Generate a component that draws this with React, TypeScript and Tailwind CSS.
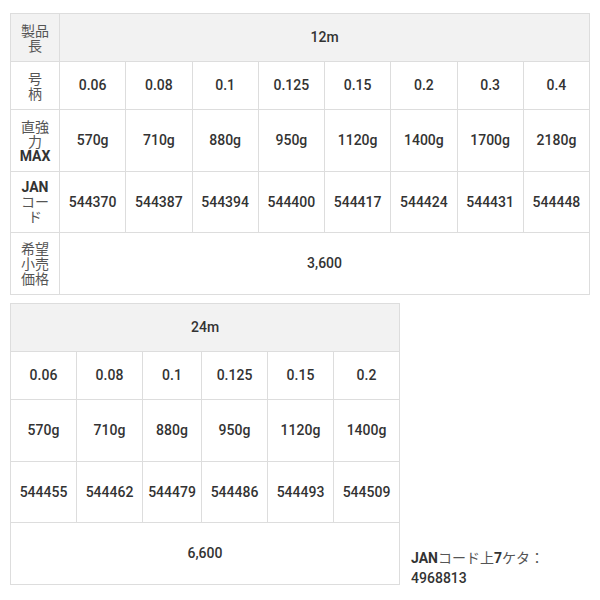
import React from 'react';

const jp = { fontFamily: '"Noto Sans CJK JP", sans-serif' };

const Jp = ({ children }: { children: React.ReactNode }) => (
  <span className="font-normal text-[#555]" style={jp}>{children}</span>
);

const sizes12 = ['0.06', '0.08', '0.1', '0.125', '0.15', '0.2', '0.3', '0.4'];
const strength12 = ['570g', '710g', '880g', '950g', '1120g', '1400g', '1700g', '2180g'];
const jan12 = ['544370', '544387', '544394', '544400', '544417', '544424', '544431', '544448'];

const sizes24 = ['0.06', '0.08', '0.1', '0.125', '0.15', '0.2'];
const strength24 = ['570g', '710g', '880g', '950g', '1120g', '1400g'];
const jan24 = ['544455', '544462', '544479', '544486', '544493', '544509'];
const cols24 = [66, 66, 59, 66, 66, 66];

const td = 'border border-[#dddddd] text-center align-middle p-0';
const th = 'border border-[#dddddd] text-center align-middle p-0 leading-[14px] text-[14px]';

const App = () => {
  return (
    <div
      className="w-[600px] h-[600px] bg-white pt-[13px] pl-[10px] text-[14px] font-medium text-[#333]"
      style={{ fontFamily: 'Roboto, "Noto Sans CJK JP", sans-serif' }}
    >
      {/* 12m */}
      <table className="w-[579px] table-fixed border-collapse">
        <colgroup>
          <col className="w-[49px]" />
          {sizes12.map((s) => (
            <col key={s} className="w-[66.25px]" />
          ))}
        </colgroup>
        <tbody>
          <tr className="h-[48px] bg-[#f2f2f2]">
            <td className={th}>
              <Jp>製品<br />長</Jp>
            </td>
            <td className={td} colSpan={8}>12m</td>
          </tr>
          <tr className="h-[48px]">
            <td className={th}>
              <Jp>号<br />柄</Jp>
            </td>
            {sizes12.map((s) => (
              <td key={s} className={td}>{s}</td>
            ))}
          </tr>
          <tr className="h-[62px]">
            <td className={th}>
              <Jp>直強<br />力</Jp>
              <br />
              <span className="font-bold text-[#333]">MAX</span>
            </td>
            {strength12.map((s) => (
              <td key={s} className={td}>{s}</td>
            ))}
          </tr>
          <tr className="h-[61px]">
            <td className={th}>
              <span className="font-bold text-[#333]">JAN</span>
              <br />
              <Jp>コー<br />ド</Jp>
            </td>
            {jan12.map((s) => (
              <td key={s} className={td}>{s}</td>
            ))}
          </tr>
          <tr className="h-[62px]">
            <td className={th}>
              <Jp>希望<br />小売<br />価格</Jp>
            </td>
            <td className={td} colSpan={8}>3,600</td>
          </tr>
        </tbody>
      </table>

      {/* 24m */}
      <div className="mt-[8px] flex items-end gap-[11px]">
        <table className="w-[389px] table-fixed border-collapse">
          <colgroup>
            {cols24.map((w, i) => (
              <col key={i} style={{ width: w }} />
            ))}
          </colgroup>
          <tbody>
            <tr className="h-[48px] bg-[#f2f2f2]">
              <td className={td} colSpan={6}>24m</td>
            </tr>
            <tr className="h-[48px]">
              {sizes24.map((s) => (
                <td key={s} className={td}>{s}</td>
              ))}
            </tr>
            <tr className="h-[62px]">
              {strength24.map((s) => (
                <td key={s} className={td}>{s}</td>
              ))}
            </tr>
            <tr className="h-[61px]">
              {jan24.map((s) => (
                <td key={s} className={td}>{s}</td>
              ))}
            </tr>
            <tr className="h-[62px]">
              <td className={td} colSpan={6}>6,600</td>
            </tr>
          </tbody>
        </table>
        <div className="mb-[-3px] text-[14px] leading-[20px]">
          <span className="font-bold">JAN</span>
          <Jp>コード上</Jp>
          <span className="font-bold">7</span>
          <Jp>ケタ：</Jp>
          <br />
          4968813
        </div>
      </div>
    </div>
  );
};

export default App;
